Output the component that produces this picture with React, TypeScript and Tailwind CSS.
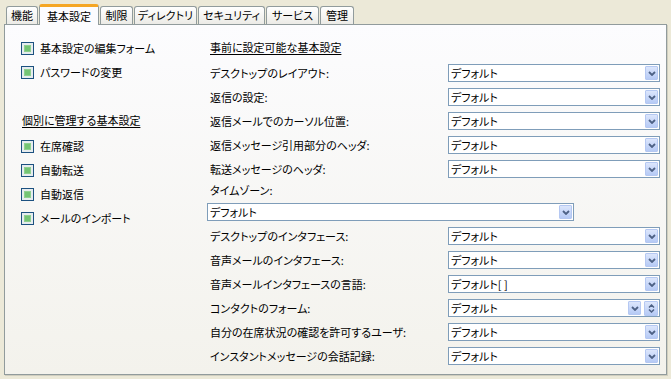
import React from "react";

const font = {
  fontFamily: '"Noto Sans CJK JP", "Noto Sans", sans-serif',
};

const tabs = [
  { label: "機能", w: "w-[32px]" },
  { label: "基本設定", w: "w-[60px]", active: true },
  { label: "制限", w: "w-[33px]" },
  { label: "ディレクトリ", w: "w-[63px]" },
  { label: "セキュリティ", w: "w-[67px]" },
  { label: "サービス", w: "w-[53px]" },
  { label: "管理", w: "w-[34px]" },
];

const leftTop = ["基本設定の編集フォーム", "パスワードの変更"];
const leftBottom = ["在席確認", "自動転送", "自動返信", "メールのインポート"];

const upperRows = [
  "デスクトップのレイアウト:",
  "返信の設定:",
  "返信メールでのカーソル位置:",
  "返信メッセージ引用部分のヘッダ:",
  "転送メッセージのヘッダ:",
];

const lowerRows: { label: string; value?: string; spin?: boolean }[] = [
  { label: "デスクトップのインタフェース:" },
  { label: "音声メールのインタフェース:" },
  { label: "音声メールインタフェースの言語:", value: "デフォルト[ ]" },
  { label: "コンタクトのフォーム:", spin: true },
  { label: "自分の在席状況の確認を許可するユーザ:" },
  { label: "インスタントメッセージの会話記録:" },
];

function Chevron({ up }: { up?: boolean }) {
  return (
    <svg width="8" height="5" viewBox="0 0 8 5" className="block">
      <polyline
        points={up ? "1,4 4,1 7,4" : "1,1 4,4 7,1"}
        fill="none"
        stroke="#4D6185"
        strokeWidth="1.8"
      />
    </svg>
  );
}

function ArrowButton() {
  return (
    <div className="w-[13px] h-[14px] mr-[1px] flex items-center justify-center rounded-[1px] border border-[#B5C8F2] bg-gradient-to-b from-[#DCE6FC] to-[#B6CAF5]">
      <Chevron />
    </div>
  );
}

function SpinButton() {
  return (
    <div className="w-[14px] h-[15px] mr-[1px] ml-[2px] flex flex-col items-center justify-center gap-[1px] rounded-[1px] border border-[#B5C8F2] bg-gradient-to-b from-[#DCE6FC] to-[#B6CAF5]">
      <svg width="7" height="4" viewBox="0 0 7 4" className="block">
        <polyline points="1,3.5 3.5,1 6,3.5" fill="none" stroke="#4D6185" strokeWidth="1.5" />
      </svg>
      <svg width="7" height="4" viewBox="0 0 7 4" className="block">
        <polyline points="1,0.5 3.5,3 6,0.5" fill="none" stroke="#4D6185" strokeWidth="1.5" />
      </svg>
    </div>
  );
}

function Select({
  value = "デフォルト",
  width,
  spin,
}: {
  value?: string;
  width: string;
  spin?: boolean;
}) {
  return (
    <div
      className={`${width} h-[18px] flex items-center border border-[#7F9DB9] bg-white pl-[2px] shrink-0`}
    >
      <span className="flex-1 text-[11px] leading-none text-black">{value}</span>
      <ArrowButton />
      {spin && <SpinButton />}
    </div>
  );
}

function Checkbox() {
  return (
    <div className="w-[13px] h-[13px] border border-[#1C5180] bg-[#E6ECEE] p-[2px] shrink-0">
      <div className="w-full h-full bg-[#74C474] border border-[#8FD08F]" />
    </div>
  );
}

function CheckRow({ label }: { label: string }) {
  return (
    <div className="h-[24px] flex items-center gap-[6px]">
      <Checkbox />
      <span className="text-[11px] text-black">{label}</span>
    </div>
  );
}

function FieldRow({
  label,
  value,
  spin,
}: {
  label: string;
  value?: string;
  spin?: boolean;
}) {
  return (
    <div className="h-[18px] flex items-center justify-between">
      <span className="pl-[3px] text-[11px] text-black">{label}</span>
      <Select width="w-[212px]" value={value} spin={spin} />
    </div>
  );
}

export default function App() {
  return (
    <div
      className="w-[671px] h-[379px] bg-[#ECE9D8] pl-[4px] pt-[4px] [font-feature-settings:'palt']"
      style={font}
    >
      {/* tab strip */}
      <div className="h-[20px] flex items-end gap-[1px] pl-[2px]">
        {tabs.map((t) =>
          t.active ? (
            <div
              key={t.label}
              className={`${t.w} h-[21px] -mb-[1px] relative z-10 flex items-center justify-center rounded-t-[3px] border-x border-[#919B9C] border-t-[3px] border-t-[#F5A623] bg-[#FCFCFE] text-[11px] text-black`}
            >
              {t.label}
            </div>
          ) : (
            <div
              key={t.label}
              className={`${t.w} h-[18px] flex items-center justify-center rounded-t-[3px] border border-b-0 border-[#919B9C] bg-gradient-to-b from-[#FFFFFF] to-[#ECEBE6] text-[11px] text-black`}
            >
              {t.label}
            </div>
          )
        )}
      </div>

      {/* panel */}
      <div className="w-[663px] h-[351px] flex border border-[#919B9C] bg-gradient-to-b from-[#FCFCFE] to-[#F3F2EC] shadow-[1px_1px_0_#D0CEBF]">
        {/* left column */}
        <div className="w-[202px] pl-[16px] pt-[11px] flex flex-col">
          {leftTop.map((l) => (
            <CheckRow key={l} label={l} />
          ))}
          <div className="h-[24px] mt-[24px] mb-[2px] flex items-center pl-[1px]">
            <span className="text-[11px] text-black underline underline-offset-[2px]">
              個別に管理する基本設定
            </span>
          </div>
          {leftBottom.map((l) => (
            <CheckRow key={l} label={l} />
          ))}
        </div>

        {/* right column */}
        <div className="flex-1 pt-[15px] pr-[6px] flex flex-col gap-[6px]">
          <div className="h-[18px] pb-[4px] flex items-center pl-[3px]">
            <span className="text-[11px] text-black underline underline-offset-[2px]">
              事前に設定可能な基本設定
            </span>
          </div>
          {upperRows.map((l) => (
            <FieldRow key={l} label={l} />
          ))}
          <div className="h-[13px] flex items-center pl-[3px]">
            <span className="text-[11px] text-black">タイムゾーン:</span>
          </div>
          <Select width="w-[367px]" />
          {lowerRows.map((r) => (
            <FieldRow key={r.label} label={r.label} value={r.value} spin={r.spin} />
          ))}
        </div>
      </div>
    </div>
  );
}
